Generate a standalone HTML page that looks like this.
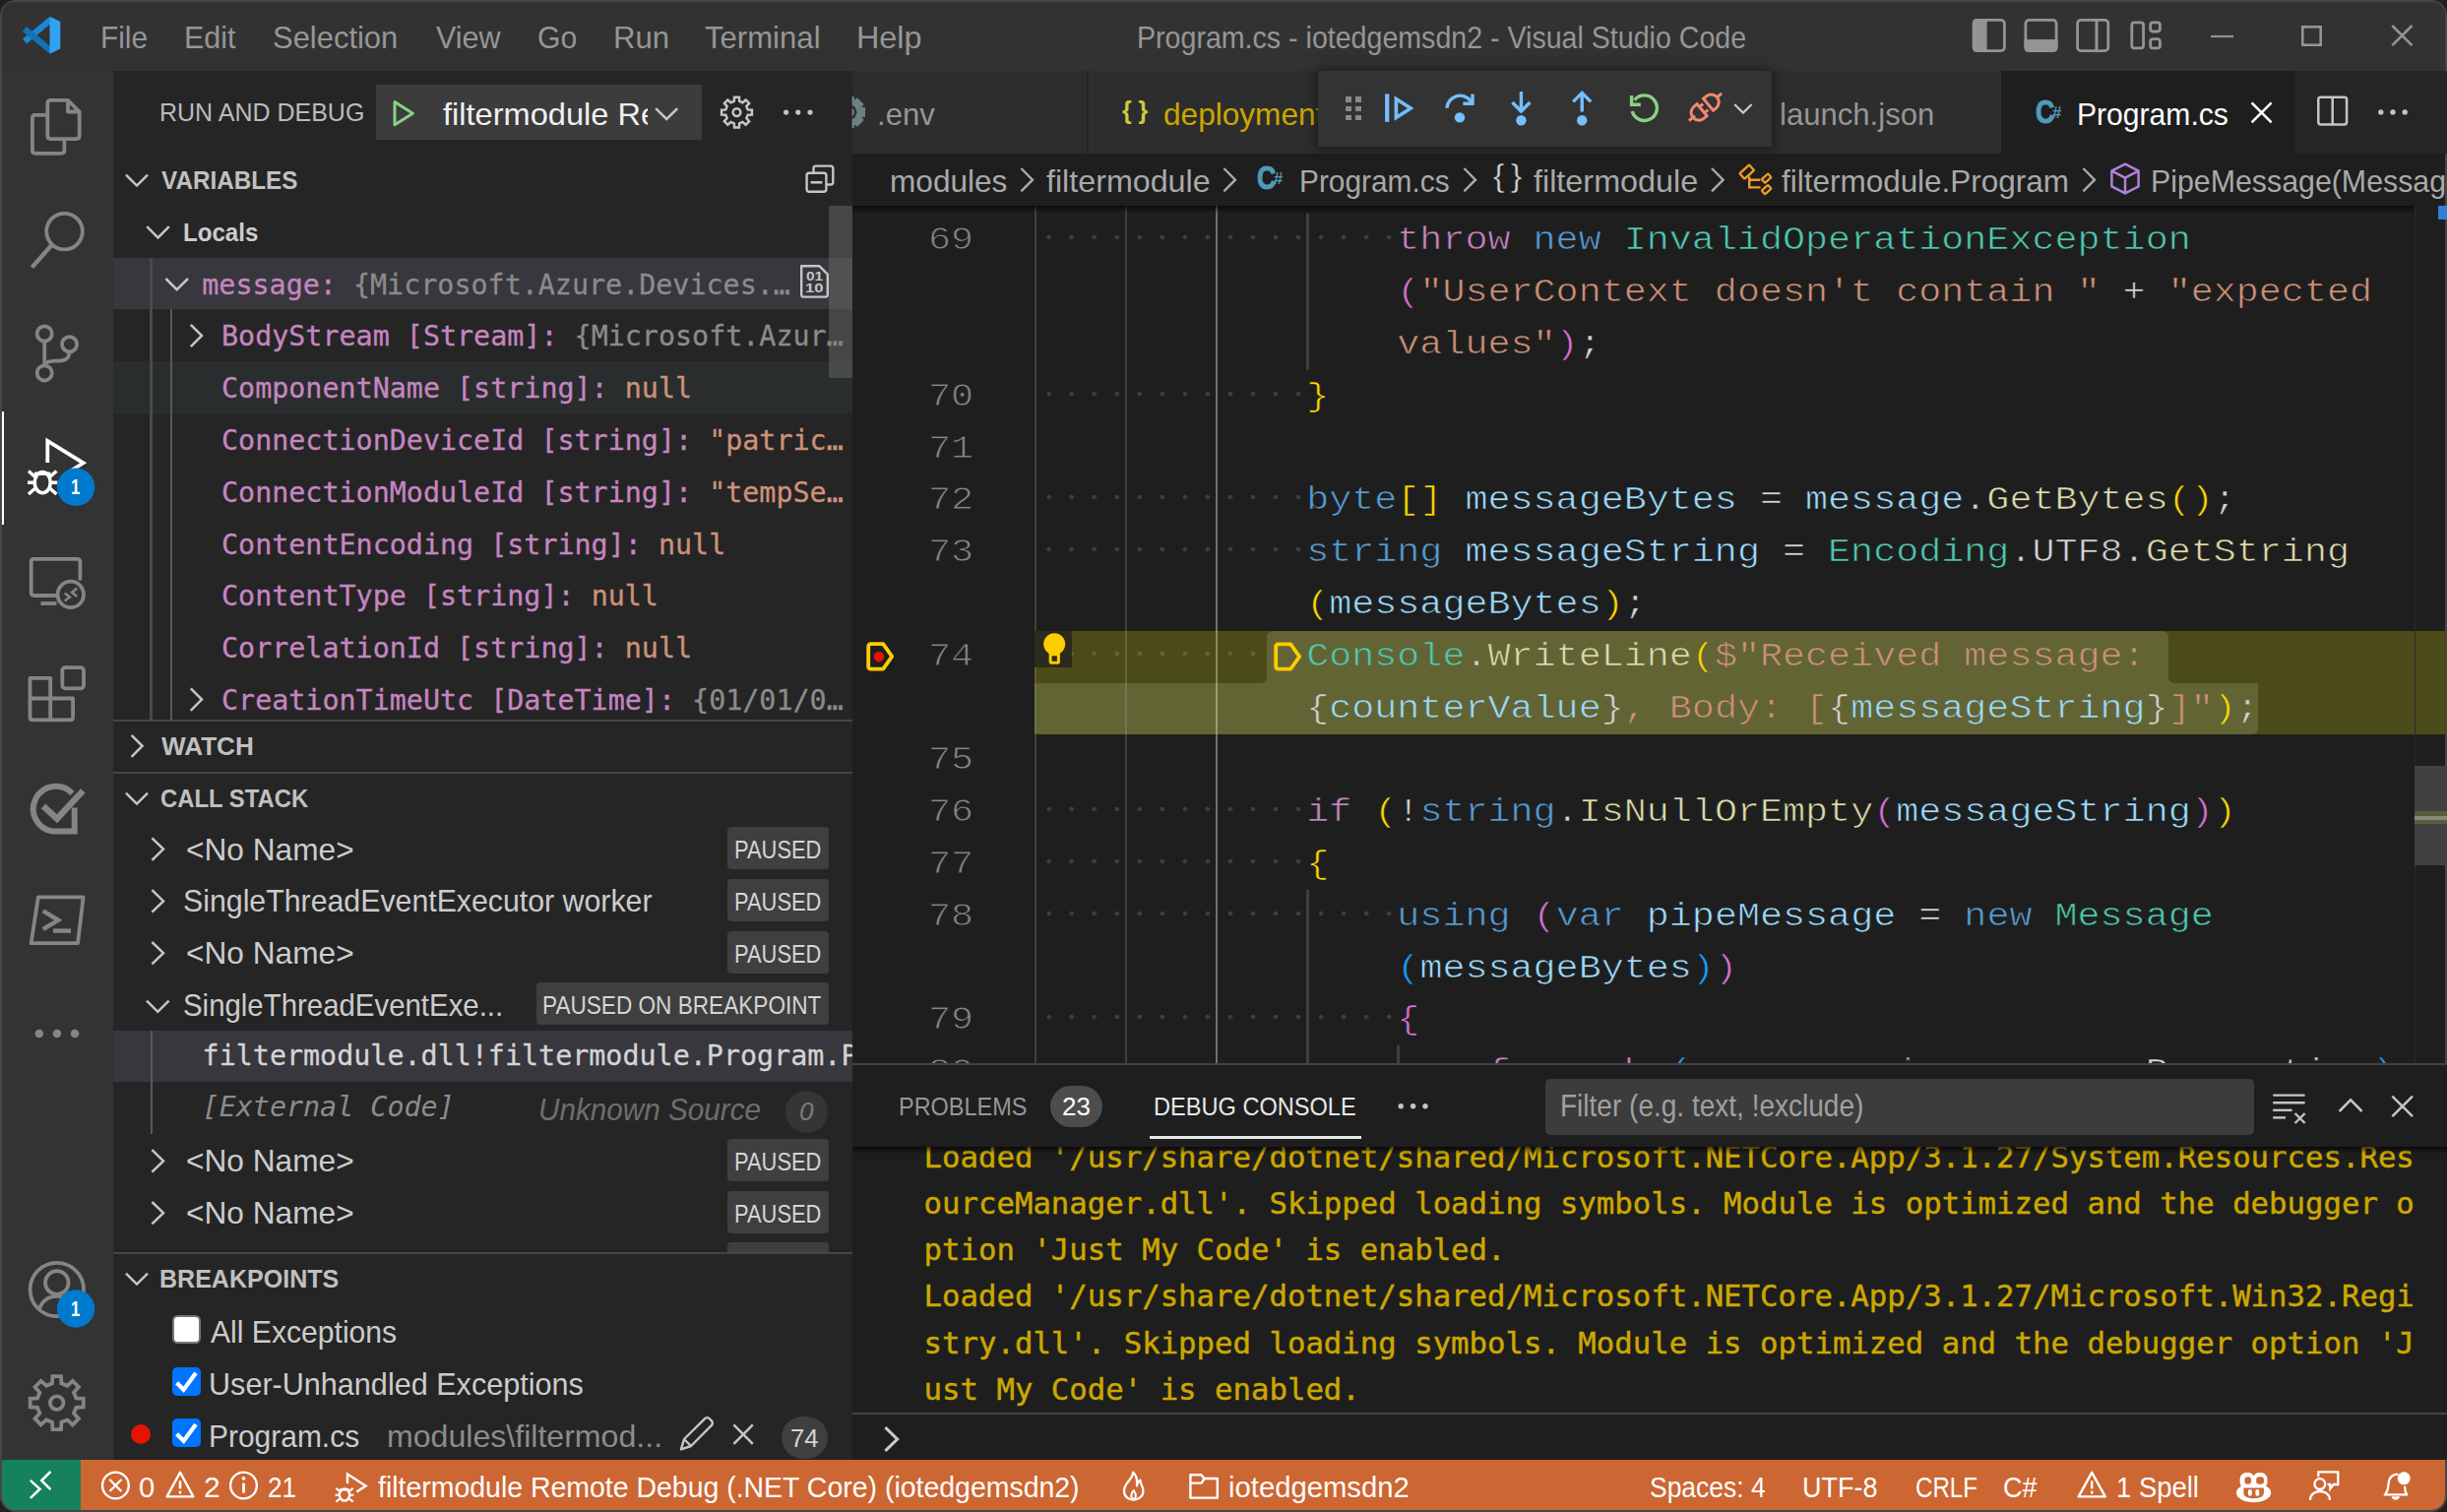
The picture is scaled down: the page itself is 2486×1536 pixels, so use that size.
<!DOCTYPE html>
<html lang="en"><head><meta charset="utf-8"><title>Program.cs - iotedgemsdn2 - Visual Studio Code</title>
<style>
*{box-sizing:border-box;margin:0;padding:0}
html,body{width:2486px;height:1536px;overflow:hidden;background:#212121}
#w{position:absolute;left:0;top:0;width:2486px;height:1536px;overflow:hidden}
#w div,#w span,#w svg{position:absolute}
#w span{display:block}
#w span span{position:static;display:inline}
#w>svg{overflow:visible;z-index:2}
</style></head>
<body><div id="w">
<div style="left:0.00px;top:0.00px;width:2486.00px;height:1536.00px;background:#464646;border-radius:16px"></div>
<div style="left:2.00px;top:2.00px;width:2482.00px;height:1532.00px;background:#1e1e1e;border-radius:14px;overflow:hidden"><div style="left:0;top:0;width:2486px;height:70.0px;background:#323233"></div><div style="left:0;top:70.0px;width:113.2px;height:1411.2px;background:#333333"></div><div style="left:113.2px;top:70.0px;width:750.4px;height:1411.2px;background:#252526"></div><div style="left:0;top:1481.2px;width:2486px;height:52.799999999999955px;background:#cc6633"></div><div style="left:0;top:1481.2px;width:79.6px;height:52.799999999999955px;background:#16825d"></div></div>
<span style="left:102.09px;top:22.59px;font:400 31.2px/31.2px 'Liberation Sans', sans-serif;color:#969696;white-space:pre;transform:scaleX(0.9574);transform-origin:0 0;">File</span>
<span style="left:187.05px;top:22.59px;font:400 31.2px/31.2px 'Liberation Sans', sans-serif;color:#969696;white-space:pre;transform:scaleX(0.9750);transform-origin:0 0;">Edit</span>
<span style="left:277.32px;top:22.59px;font:400 31.2px/31.2px 'Liberation Sans', sans-serif;color:#969696;white-space:pre;transform:scaleX(0.9920);transform-origin:0 0;">Selection</span>
<span style="left:442.50px;top:22.59px;font:400 31.2px/31.2px 'Liberation Sans', sans-serif;color:#969696;white-space:pre;transform:scaleX(0.9776);transform-origin:0 0;">View</span>
<span style="left:546.03px;top:22.59px;font:400 31.2px/31.2px 'Liberation Sans', sans-serif;color:#969696;white-space:pre;transform:scaleX(0.9675);transform-origin:0 0;">Go</span>
<span style="left:623.00px;top:22.59px;font:400 31.2px/31.2px 'Liberation Sans', sans-serif;color:#969696;white-space:pre;">Run</span>
<span style="left:716.00px;top:22.59px;font:400 31.2px/31.2px 'Liberation Sans', sans-serif;color:#969696;white-space:pre;transform:scaleX(0.9974);transform-origin:0 0;">Terminal</span>
<span style="left:869.62px;top:22.59px;font:400 31.2px/31.2px 'Liberation Sans', sans-serif;color:#969696;white-space:pre;transform:scaleX(1.0377);transform-origin:0 0;">Help</span>
<span style="left:1155.17px;top:22.89px;font:400 31.2px/31.2px 'Liberation Sans', sans-serif;color:#969696;white-space:pre;transform:scaleX(0.9165);transform-origin:0 0;">Program.cs - iotedgemsdn2 - Visual Studio Code</span>
<div style="left:2.00px;top:417.60px;width:2.40px;height:115.20px;background:#ffffff;"></div>
<span style="left:71.73px;top:484.32px;font:700 21.6px/21.6px 'Liberation Sans', sans-serif;color:#ffffff;white-space:pre;transform:scaleX(0.7727);transform-origin:0 0;z-index:5;">1</span>
<span style="left:71.63px;top:1318.92px;font:700 21.6px/21.6px 'Liberation Sans', sans-serif;color:#ffffff;white-space:pre;transform:scaleX(0.7727);transform-origin:0 0;z-index:5;">1</span>
<span style="left:162.11px;top:101.45px;font:400 26.4px/26.4px 'Liberation Sans', sans-serif;color:#bbbbbb;white-space:pre;transform:scaleX(0.9472);transform-origin:0 0;">RUN AND DEBUG</span>
<div style="left:382.00px;top:85.80px;width:330.80px;height:55.90px;background:#3c3c3c;"></div>
<div style="left:449.50px;top:94.59px;width:208.50px;height:45.20px;overflow:hidden"><span style="position:absolute;left:0;top:6px;font:400 31.2px/31.2px 'Liberation Sans', sans-serif;color:#f0f0f0;white-space:pre;transform:scaleX(1.0445);transform-origin:0 0;">filtermodule Remote Debug (.NET Core)</span></div>
<span style="left:163.50px;top:169.55px;font:700 26.4px/26.4px 'Liberation Sans', sans-serif;color:#c0c0c0;white-space:pre;transform:scaleX(0.9200);transform-origin:0 0;">VARIABLES</span>
<div style="left:115.20px;top:261.60px;width:750.40px;height:52.80px;background:#37373d;"></div>
<div style="left:115.20px;top:367.20px;width:750.40px;height:52.80px;background:#2a2d2e;"></div>
<div style="left:152.40px;top:261.60px;width:2.20px;height:469.60px;background:#4a4a4b;"></div>
<div style="left:172.90px;top:314.40px;width:2.20px;height:416.80px;background:#585858;"></div>
<span style="left:186.37px;top:222.75px;font:700 26.4px/26.4px 'Liberation Sans', sans-serif;color:#cccccc;white-space:pre;transform:scaleX(0.9136);transform-origin:0 0;">Locals</span>
<span style="left:205.30px;top:275.50px;font:400 28.37px/28.37px 'DejaVu Sans Mono', 'Liberation Mono', monospace;color:#ccc;white-space:pre;-webkit-text-stroke-width:0.3px;"><span style="color:#c586c0">message: </span><span style="color:#8b8b8b">{Microsoft.Azure.Devices.…</span></span>
<span style="left:225.00px;top:328.30px;font:400 28.37px/28.37px 'DejaVu Sans Mono', 'Liberation Mono', monospace;color:#ccc;white-space:pre;-webkit-text-stroke-width:0.3px;"><span style="color:#c586c0">BodyStream [Stream]: </span><span style="color:#8b8b8b">{Microsoft.Azur…</span></span>
<span style="left:225.00px;top:381.10px;font:400 28.37px/28.37px 'DejaVu Sans Mono', 'Liberation Mono', monospace;color:#ccc;white-space:pre;-webkit-text-stroke-width:0.3px;"><span style="color:#c586c0">ComponentName [string]: </span><span style="color:#ce9178">null</span></span>
<span style="left:225.00px;top:433.90px;font:400 28.37px/28.37px 'DejaVu Sans Mono', 'Liberation Mono', monospace;color:#ccc;white-space:pre;-webkit-text-stroke-width:0.3px;"><span style="color:#c586c0">ConnectionDeviceId [string]: </span><span style="color:#ce9178">"patric…</span></span>
<span style="left:225.00px;top:486.70px;font:400 28.37px/28.37px 'DejaVu Sans Mono', 'Liberation Mono', monospace;color:#ccc;white-space:pre;-webkit-text-stroke-width:0.3px;"><span style="color:#c586c0">ConnectionModuleId [string]: </span><span style="color:#ce9178">"tempSe…</span></span>
<span style="left:225.00px;top:539.50px;font:400 28.37px/28.37px 'DejaVu Sans Mono', 'Liberation Mono', monospace;color:#ccc;white-space:pre;-webkit-text-stroke-width:0.3px;"><span style="color:#c586c0">ContentEncoding [string]: </span><span style="color:#ce9178">null</span></span>
<span style="left:225.00px;top:592.30px;font:400 28.37px/28.37px 'DejaVu Sans Mono', 'Liberation Mono', monospace;color:#ccc;white-space:pre;-webkit-text-stroke-width:0.3px;"><span style="color:#c586c0">ContentType [string]: </span><span style="color:#ce9178">null</span></span>
<span style="left:225.00px;top:645.10px;font:400 28.37px/28.37px 'DejaVu Sans Mono', 'Liberation Mono', monospace;color:#ccc;white-space:pre;-webkit-text-stroke-width:0.3px;"><span style="color:#c586c0">CorrelationId [string]: </span><span style="color:#ce9178">null</span></span>
<span style="left:225.00px;top:697.90px;font:400 28.37px/28.37px 'DejaVu Sans Mono', 'Liberation Mono', monospace;color:#ccc;white-space:pre;-webkit-text-stroke-width:0.3px;"><span style="color:#c586c0">CreationTimeUtc [DateTime]: </span><span style="color:#8b8b8b">{01/01/0…</span></span>
<span style="left:819.40px;top:274.93px;font:700 12.6px/12.6px 'Liberation Sans', sans-serif;color:#c5c5c5;white-space:pre;transform:scaleX(1.2286);transform-origin:0 0;">01</span>
<span style="left:818.08px;top:286.93px;font:700 12.6px/12.6px 'Liberation Sans', sans-serif;color:#c5c5c5;white-space:pre;transform:scaleX(1.3231);transform-origin:0 0;">10</span>
<div style="left:842.00px;top:209.20px;width:23.60px;height:174.40px;background:rgba(121,121,121,0.4);"></div>
<div style="left:115.20px;top:731.20px;width:750.40px;height:56.00px;background:#252526;"></div>
<div style="left:115.20px;top:731.20px;width:750.40px;height:2.20px;background:#464647;"></div>
<span style="left:163.50px;top:744.75px;font:700 26.4px/26.4px 'Liberation Sans', sans-serif;color:#c0c0c0;white-space:pre;transform:scaleX(0.9903);transform-origin:0 0;">WATCH</span>
<div style="left:115.20px;top:784.00px;width:750.40px;height:2.20px;background:#464647;"></div>
<span style="left:162.60px;top:797.55px;font:700 26.4px/26.4px 'Liberation Sans', sans-serif;color:#c0c0c0;white-space:pre;transform:scaleX(0.9036);transform-origin:0 0;">CALL STACK</span>
<span style="left:189.48px;top:847.59px;font:400 31.2px/31.2px 'Liberation Sans', sans-serif;color:#cccccc;white-space:pre;transform:scaleX(1.0151);transform-origin:0 0;">&lt;No Name&gt;</span>
<div style="left:739.00px;top:839.90px;width:103.00px;height:43.10px;background:#3f3f40;border-radius:4px"></div>
<span style="left:746.42px;top:849.99px;font:400 26.0px/26.0px 'Liberation Sans', sans-serif;color:#d4d4d4;white-space:pre;transform:scaleX(0.8422);transform-origin:0 0;">PAUSED</span>
<span style="left:186.06px;top:900.39px;font:400 31.2px/31.2px 'Liberation Sans', sans-serif;color:#cccccc;white-space:pre;transform:scaleX(0.9713);transform-origin:0 0;">SingleThreadEventExecutor worker</span>
<div style="left:739.00px;top:892.70px;width:103.00px;height:43.10px;background:#3f3f40;border-radius:4px"></div>
<span style="left:746.42px;top:902.79px;font:400 26.0px/26.0px 'Liberation Sans', sans-serif;color:#d4d4d4;white-space:pre;transform:scaleX(0.8422);transform-origin:0 0;">PAUSED</span>
<span style="left:189.48px;top:953.19px;font:400 31.2px/31.2px 'Liberation Sans', sans-serif;color:#cccccc;white-space:pre;transform:scaleX(1.0151);transform-origin:0 0;">&lt;No Name&gt;</span>
<div style="left:739.00px;top:945.50px;width:103.00px;height:43.10px;background:#3f3f40;border-radius:4px"></div>
<span style="left:746.42px;top:955.59px;font:400 26.0px/26.0px 'Liberation Sans', sans-serif;color:#d4d4d4;white-space:pre;transform:scaleX(0.8422);transform-origin:0 0;">PAUSED</span>
<span style="left:186.11px;top:1005.99px;font:400 31.2px/31.2px 'Liberation Sans', sans-serif;color:#cccccc;white-space:pre;transform:scaleX(0.9426);transform-origin:0 0;">SingleThreadEventExe...</span>
<div style="left:545.00px;top:998.30px;width:297.00px;height:43.10px;background:#3f3f40;border-radius:4px"></div>
<span style="left:550.66px;top:1008.39px;font:400 26.0px/26.0px 'Liberation Sans', sans-serif;color:#d4d4d4;white-space:pre;transform:scaleX(0.8691);transform-origin:0 0;">PAUSED ON BREAKPOINT</span>
<div style="left:115.20px;top:1046.50px;width:750.40px;height:52.80px;background:#37373d;"></div>
<div style="left:152.60px;top:1046.50px;width:2.20px;height:105.60px;background:#585858;"></div>
<div style="left:205.60px;top:1053.00px;width:660.00px;height:42.37px;overflow:hidden"><span style="position:absolute;left:0;top:6px;font:400 28.37px/28.37px 'DejaVu Sans Mono', 'Liberation Mono', monospace;color:#d4d4d4;white-space:pre;-webkit-text-stroke-width:0.3px;">filtermodule.dll!filtermodule.Program.PipeMessage(Message message, object userContext) Line 74</span></div>
<span style="left:205.60px;top:1111.40px;font:italic 400 28.37px/28.37px 'DejaVu Sans Mono', 'Liberation Mono', monospace;color:#8c8c8c;white-space:pre;">[External Code]</span>
<span style="left:546.90px;top:1111.79px;font:italic 400 31.2px/31.2px 'Liberation Sans', sans-serif;color:#6e6e6e;white-space:pre;transform:scaleX(0.9519);transform-origin:0 0;">Unknown Source</span>
<div style="left:797.90px;top:1107.70px;width:43.20px;height:43.30px;background:#353536;border-radius:22px"></div>
<span style="left:811.81px;top:1115.85px;font:italic 400 26.4px/26.4px 'Liberation Sans', sans-serif;color:#7c7c7c;white-space:pre;transform:scaleX(0.9929);transform-origin:0 0;">0</span>
<span style="left:189.48px;top:1164.39px;font:400 31.2px/31.2px 'Liberation Sans', sans-serif;color:#cccccc;white-space:pre;transform:scaleX(1.0151);transform-origin:0 0;">&lt;No Name&gt;</span>
<div style="left:739.00px;top:1156.70px;width:103.00px;height:43.10px;background:#3f3f40;border-radius:4px"></div>
<span style="left:746.42px;top:1166.79px;font:400 26.0px/26.0px 'Liberation Sans', sans-serif;color:#d4d4d4;white-space:pre;transform:scaleX(0.8422);transform-origin:0 0;">PAUSED</span>
<span style="left:189.48px;top:1217.19px;font:400 31.2px/31.2px 'Liberation Sans', sans-serif;color:#cccccc;white-space:pre;transform:scaleX(1.0151);transform-origin:0 0;">&lt;No Name&gt;</span>
<div style="left:739.00px;top:1209.50px;width:103.00px;height:43.10px;background:#3f3f40;border-radius:4px"></div>
<span style="left:746.42px;top:1219.59px;font:400 26.0px/26.0px 'Liberation Sans', sans-serif;color:#d4d4d4;white-space:pre;transform:scaleX(0.8422);transform-origin:0 0;">PAUSED</span>
<div style="left:739.00px;top:1262.30px;width:103.00px;height:12.00px;background:#3f3f40;border-radius:4px 4px 0 0"></div>
<div style="left:115.20px;top:1272.00px;width:750.40px;height:211.20px;background:#252526;"></div>
<div style="left:115.20px;top:1272.00px;width:750.40px;height:2.20px;background:#464647;"></div>
<span style="left:161.60px;top:1285.55px;font:700 26.4px/26.4px 'Liberation Sans', sans-serif;color:#c0c0c0;white-space:pre;transform:scaleX(0.9487);transform-origin:0 0;">BREAKPOINTS</span>
<div style="left:175.20px;top:1336.00px;width:28.90px;height:28.90px;background:#ffffff;border-radius:5.5px;border:2.2px solid #767676"></div>
<span style="left:214.40px;top:1338.09px;font:400 31.2px/31.2px 'Liberation Sans', sans-serif;color:#cccccc;white-space:pre;transform:scaleX(0.9656);transform-origin:0 0;">All Exceptions</span>
<div style="left:175.20px;top:1388.80px;width:28.90px;height:28.90px;background:#0075ff;border-radius:5px"></div>
<span style="left:212.44px;top:1390.79px;font:400 31.2px/31.2px 'Liberation Sans', sans-serif;color:#cccccc;white-space:pre;transform:scaleX(0.9806);transform-origin:0 0;">User-Unhandled Exceptions</span>
<div style="left:175.20px;top:1440.90px;width:28.90px;height:28.90px;background:#0075ff;border-radius:5px"></div>
<span style="left:212.48px;top:1443.59px;font:400 31.2px/31.2px 'Liberation Sans', sans-serif;color:#cccccc;white-space:pre;transform:scaleX(0.9605);transform-origin:0 0;">Program.cs</span>
<span style="left:393.34px;top:1443.59px;font:400 31.2px/31.2px 'Liberation Sans', sans-serif;color:#8c8c8c;white-space:pre;transform:scaleX(1.0291);transform-origin:0 0;">modules\filtermod...</span>
<div style="left:794.00px;top:1438.70px;width:47.00px;height:43.30px;background:#3f3f40;border-radius:21.6px"></div>
<span style="left:802.83px;top:1447.65px;font:400 26.4px/26.4px 'Liberation Sans', sans-serif;color:#d4d4d4;white-space:pre;transform:scaleX(0.9714);transform-origin:0 0;">74</span>
<div style="left:865.60px;top:72.00px;width:1620.40px;height:84.00px;background:#252526;"></div>
<div style="left:865.60px;top:72.00px;width:238.20px;height:84.00px;background:#2d2d2d;"></div>
<div style="left:1106.20px;top:72.00px;width:927.00px;height:84.00px;background:#2d2d2d;"></div>
<div style="left:2033.20px;top:72.00px;width:297.80px;height:84.00px;background:#1e1e1e;"></div>
<span style="left:891.01px;top:100.69px;font:400 31.2px/31.2px 'Liberation Sans', sans-serif;color:#969696;white-space:pre;transform:scaleX(0.9964);transform-origin:0 0;">.env</span>
<span style="left:1139.60px;top:98.99px;font:700 26.0px/26.0px 'Liberation Sans', sans-serif;color:#cbcb41;white-space:pre;transform:scaleX(0.9556);transform-origin:0 0;">{ }</span>
<div style="left:1182.49px;top:94.69px;width:157.01px;height:45.20px;overflow:hidden"><span style="position:absolute;left:0;top:6px;font:400 31.2px/31.2px 'Liberation Sans', sans-serif;color:#cca700;white-space:pre;transform:scaleX(1.0133);transform-origin:0 0;">deployment.template.json</span></div>
<span style="left:1808.31px;top:100.69px;font:400 31.2px/31.2px 'Liberation Sans', sans-serif;color:#969696;white-space:pre;transform:scaleX(0.9968);transform-origin:0 0;">launch.json</span>
<span style="left:2067.79px;top:96.87px;font:700 33.0px/33.0px 'Liberation Sans', sans-serif;color:#519aba;white-space:pre;transform:scaleX(0.8091);transform-origin:0 0;-webkit-text-stroke:1.1px #519aba;">C</span>
<span style="left:2085.00px;top:105.81px;font:700 17.0px/17.0px 'Liberation Sans', sans-serif;color:#519aba;white-space:pre;transform:scaleX(0.9800);transform-origin:0 0;">#</span>
<span style="left:2109.87px;top:100.69px;font:400 31.2px/31.2px 'Liberation Sans', sans-serif;color:#ffffff;white-space:pre;transform:scaleX(0.9650);transform-origin:0 0;">Program.cs</span>
<div style="left:1339.20px;top:71.60px;width:461.20px;height:77.20px;background:#333333;box-shadow:0 0 10px 1px rgba(0,0,0,0.55)"></div>
<div style="left:1367.40px;top:98.40px;width:5.40px;height:5.40px;background:#8a8a8a;"></div>
<div style="left:1377.20px;top:98.40px;width:5.40px;height:5.40px;background:#8a8a8a;"></div>
<div style="left:1367.40px;top:107.70px;width:5.40px;height:5.40px;background:#8a8a8a;"></div>
<div style="left:1377.20px;top:107.70px;width:5.40px;height:5.40px;background:#8a8a8a;"></div>
<div style="left:1367.40px;top:117.00px;width:5.40px;height:5.40px;background:#8a8a8a;"></div>
<div style="left:1377.20px;top:117.00px;width:5.40px;height:5.40px;background:#8a8a8a;"></div>
<span style="left:903.57px;top:168.59px;font:400 31.2px/31.2px 'Liberation Sans', sans-serif;color:#a9a9a9;white-space:pre;transform:scaleX(1.0130);transform-origin:0 0;">modules</span>
<span style="left:1062.70px;top:168.59px;font:400 31.2px/31.2px 'Liberation Sans', sans-serif;color:#a9a9a9;white-space:pre;transform:scaleX(1.0337);transform-origin:0 0;">filtermodule</span>
<span style="left:1319.69px;top:168.59px;font:400 31.2px/31.2px 'Liberation Sans', sans-serif;color:#a9a9a9;white-space:pre;transform:scaleX(0.9573);transform-origin:0 0;">Program.cs</span>
<span style="left:1558.00px;top:168.59px;font:400 31.2px/31.2px 'Liberation Sans', sans-serif;color:#a9a9a9;white-space:pre;transform:scaleX(1.0375);transform-origin:0 0;">filtermodule</span>
<span style="left:1810.30px;top:168.59px;font:400 31.2px/31.2px 'Liberation Sans', sans-serif;color:#a9a9a9;white-space:pre;transform:scaleX(1.0087);transform-origin:0 0;">filtermodule.Program</span>
<div style="left:2185.46px;top:162.59px;width:298.54px;height:45.20px;overflow:hidden"><span style="position:absolute;left:0;top:6px;font:400 31.2px/31.2px 'Liberation Sans', sans-serif;color:#a9a9a9;white-space:pre;transform:scaleX(0.9725);transform-origin:0 0;">PipeMessage(Message, object)</span></div>
<span style="left:1276.79px;top:164.47px;font:700 33.0px/33.0px 'Liberation Sans', sans-serif;color:#519aba;white-space:pre;transform:scaleX(0.8091);transform-origin:0 0;-webkit-text-stroke:1.1px #519aba;">C</span>
<span style="left:1294.00px;top:173.41px;font:700 17.0px/17.0px 'Liberation Sans', sans-serif;color:#519aba;white-space:pre;transform:scaleX(0.9800);transform-origin:0 0;">#</span>
<span style="left:1516.50px;top:163.45px;font:400 31.6px/31.6px 'Liberation Sans', sans-serif;color:#d4d4d4;white-space:pre;transform:scaleX(1.0700);transform-origin:0 0;-webkit-text-stroke:0.35px #1e1e1e;">{</span>
<span style="left:1535.00px;top:163.45px;font:400 31.6px/31.6px 'Liberation Sans', sans-serif;color:#d4d4d4;white-space:pre;transform:scaleX(1.0500);transform-origin:0 0;-webkit-text-stroke:0.35px #1e1e1e;">}</span>
<div style="left:1051.00px;top:640.90px;width:1434.00px;height:105.60px;background:#4b4a19;"></div>
<div style="left:1286.60px;top:640.90px;width:916.10px;height:53.80px;background:#626434;border-radius:6px 6px 0 0"></div>
<div style="left:1051.00px;top:693.70px;width:1242.60px;height:52.80px;background:#626434;border-radius:6px 0 6px 6px"></div>
<div style="left:2202.70px;top:687.70px;width:6.00px;height:6.00px;background:#626434;"></div>
<div style="left:2202.70px;top:687.70px;width:6.00px;height:6.00px;background:#4b4a19;border-radius:0 0 0 6px"></div>
<div style="left:1280.60px;top:687.70px;width:6.00px;height:6.00px;background:#626434;"></div>
<div style="left:1280.60px;top:687.70px;width:6.00px;height:6.00px;background:#4b4a19;border-radius:0 0 6px 0"></div>
<div style="left:1050.80px;top:208.80px;width:2.40px;height:872.20px;background:#404040;"></div>
<div style="left:1143.00px;top:208.80px;width:2.40px;height:872.20px;background:#404040;"></div>
<div style="left:1235.10px;top:208.80px;width:2.40px;height:872.20px;background:#707070;"></div>
<div style="left:1050.80px;top:640.90px;width:2.40px;height:52.80px;background:#5e5e2f;"></div>
<div style="left:1050.80px;top:693.70px;width:2.40px;height:52.80px;background:#6f7144;"></div>
<div style="left:1143.00px;top:640.90px;width:2.40px;height:52.80px;background:#666633;"></div>
<div style="left:1143.00px;top:693.70px;width:2.40px;height:52.80px;background:#75774a;"></div>
<div style="left:1235.10px;top:640.90px;width:2.40px;height:52.80px;background:#8d8d5a;"></div>
<div style="left:1235.10px;top:693.70px;width:2.40px;height:52.80px;background:#9a9b70;"></div>
<div style="left:1327.30px;top:217.30px;width:2.40px;height:158.40px;background:#404040;"></div>
<div style="left:1327.30px;top:903.70px;width:2.40px;height:177.30px;background:#404040;"></div>
<div style="left:1419.40px;top:1062.10px;width:2.40px;height:18.90px;background:#404040;"></div>
<span style="left:943.00px;top:224.47px;font:400 38.4px/38.4px 'Liberation Mono', monospace;color:#858585;white-space:pre;transform:scaleY(0.87);transform-origin:0 29.43px;-webkit-text-stroke:1.0px #1e1e1e;">69</span>
<div style="left:1052.00px;top:237.40px;width:368.64px;height:8.00px;background:radial-gradient(circle at 13.7px 4px, rgba(227,228,226,0.17) 1.7px, rgba(227,228,226,0) 2.7px);background-size:23.04px 8px"></div>
<span style="left:1419.34px;top:224.47px;font:400 38.4px/38.4px 'Liberation Mono', monospace;color:#d4d4d4;white-space:pre;transform:scaleY(0.87);transform-origin:0 29.43px;-webkit-text-stroke:0.8px #1e1e1e;"><span style="color:#c586c0">throw</span><span style="color:#d4d4d4"> </span><span style="color:#569cd6">new</span><span style="color:#d4d4d4"> </span><span style="color:#4ec9b0">InvalidOperationException</span></span>
<span style="left:1419.34px;top:277.27px;font:400 38.4px/38.4px 'Liberation Mono', monospace;color:#d4d4d4;white-space:pre;transform:scaleY(0.87);transform-origin:0 29.43px;-webkit-text-stroke:0.8px #1e1e1e;"><span style="color:#da70d6">(</span><span style="color:#ce9178">"UserContext doesn't contain "</span><span style="color:#d4d4d4"> + </span><span style="color:#ce9178">"expected</span></span>
<span style="left:1419.34px;top:330.07px;font:400 38.4px/38.4px 'Liberation Mono', monospace;color:#d4d4d4;white-space:pre;transform:scaleY(0.87);transform-origin:0 29.43px;-webkit-text-stroke:0.8px #1e1e1e;"><span style="color:#ce9178">values"</span><span style="color:#da70d6">)</span><span style="color:#d4d4d4">;</span></span>
<span style="left:943.00px;top:382.87px;font:400 38.4px/38.4px 'Liberation Mono', monospace;color:#858585;white-space:pre;transform:scaleY(0.87);transform-origin:0 29.43px;-webkit-text-stroke:1.0px #1e1e1e;">70</span>
<div style="left:1052.00px;top:395.80px;width:276.48px;height:8.00px;background:radial-gradient(circle at 13.7px 4px, rgba(227,228,226,0.17) 1.7px, rgba(227,228,226,0) 2.7px);background-size:23.04px 8px"></div>
<span style="left:1327.18px;top:382.87px;font:400 38.4px/38.4px 'Liberation Mono', monospace;color:#d4d4d4;white-space:pre;transform:scaleY(0.87);transform-origin:0 29.43px;-webkit-text-stroke:0.8px #1e1e1e;"><span style="color:#ffd700">}</span></span>
<span style="left:943.00px;top:435.67px;font:400 38.4px/38.4px 'Liberation Mono', monospace;color:#858585;white-space:pre;transform:scaleY(0.87);transform-origin:0 29.43px;-webkit-text-stroke:1.0px #1e1e1e;">71</span>
<span style="left:943.00px;top:488.47px;font:400 38.4px/38.4px 'Liberation Mono', monospace;color:#858585;white-space:pre;transform:scaleY(0.87);transform-origin:0 29.43px;-webkit-text-stroke:1.0px #1e1e1e;">72</span>
<div style="left:1052.00px;top:501.40px;width:276.48px;height:8.00px;background:radial-gradient(circle at 13.7px 4px, rgba(227,228,226,0.17) 1.7px, rgba(227,228,226,0) 2.7px);background-size:23.04px 8px"></div>
<span style="left:1327.18px;top:488.47px;font:400 38.4px/38.4px 'Liberation Mono', monospace;color:#d4d4d4;white-space:pre;transform:scaleY(0.87);transform-origin:0 29.43px;-webkit-text-stroke:0.8px #1e1e1e;"><span style="color:#569cd6">byte</span><span style="color:#ffd700">[]</span><span style="color:#9cdcfe"> messageBytes</span><span style="color:#d4d4d4"> = </span><span style="color:#9cdcfe">message</span><span style="color:#d4d4d4">.</span><span style="color:#dcdcaa">GetBytes</span><span style="color:#ffd700">()</span><span style="color:#d4d4d4">;</span></span>
<span style="left:943.00px;top:541.27px;font:400 38.4px/38.4px 'Liberation Mono', monospace;color:#858585;white-space:pre;transform:scaleY(0.87);transform-origin:0 29.43px;-webkit-text-stroke:1.0px #1e1e1e;">73</span>
<div style="left:1052.00px;top:554.20px;width:276.48px;height:8.00px;background:radial-gradient(circle at 13.7px 4px, rgba(227,228,226,0.17) 1.7px, rgba(227,228,226,0) 2.7px);background-size:23.04px 8px"></div>
<span style="left:1327.18px;top:541.27px;font:400 38.4px/38.4px 'Liberation Mono', monospace;color:#d4d4d4;white-space:pre;transform:scaleY(0.87);transform-origin:0 29.43px;-webkit-text-stroke:0.8px #1e1e1e;"><span style="color:#569cd6">string</span><span style="color:#9cdcfe"> messageString</span><span style="color:#d4d4d4"> = </span><span style="color:#4ec9b0">Encoding</span><span style="color:#d4d4d4">.</span><span style="color:#d4d4d4">UTF8</span><span style="color:#d4d4d4">.</span><span style="color:#dcdcaa">GetString</span></span>
<span style="left:1327.18px;top:594.07px;font:400 38.4px/38.4px 'Liberation Mono', monospace;color:#d4d4d4;white-space:pre;transform:scaleY(0.87);transform-origin:0 29.43px;-webkit-text-stroke:0.8px #1e1e1e;"><span style="color:#ffd700">(</span><span style="color:#9cdcfe">messageBytes</span><span style="color:#ffd700">)</span><span style="color:#d4d4d4">;</span></span>
<span style="left:943.00px;top:646.87px;font:400 38.4px/38.4px 'Liberation Mono', monospace;color:#858585;white-space:pre;transform:scaleY(0.87);transform-origin:0 29.43px;-webkit-text-stroke:1.0px #1e1e1e;">74</span>
<div style="left:1052.00px;top:659.80px;width:230.40px;height:8.00px;background:radial-gradient(circle at 13.7px 4px, rgba(227,228,226,0.17) 1.7px, rgba(227,228,226,0) 2.7px);background-size:23.04px 8px"></div>
<span style="left:1327.18px;top:646.87px;font:400 38.4px/38.4px 'Liberation Mono', monospace;color:#d4d4d4;white-space:pre;transform:scaleY(0.87);transform-origin:0 29.43px;-webkit-text-stroke:0.8px #626434;"><span style="color:#4ec9b0">Console</span><span style="color:#d4d4d4">.</span><span style="color:#dcdcaa">WriteLine</span><span style="color:#ffd700">(</span><span style="color:#ce9178">$"Received message: </span></span>
<span style="left:1327.18px;top:699.67px;font:400 38.4px/38.4px 'Liberation Mono', monospace;color:#d4d4d4;white-space:pre;transform:scaleY(0.87);transform-origin:0 29.43px;-webkit-text-stroke:0.8px #626434;"><span style="color:#d4d4d4">{</span><span style="color:#9cdcfe">counterValue</span><span style="color:#d4d4d4">}</span><span style="color:#ce9178">, Body: [</span><span style="color:#d4d4d4">{</span><span style="color:#9cdcfe">messageString</span><span style="color:#d4d4d4">}</span><span style="color:#ce9178">]"</span><span style="color:#ffd700">)</span><span style="color:#d4d4d4">;</span></span>
<span style="left:943.00px;top:752.47px;font:400 38.4px/38.4px 'Liberation Mono', monospace;color:#858585;white-space:pre;transform:scaleY(0.87);transform-origin:0 29.43px;-webkit-text-stroke:1.0px #1e1e1e;">75</span>
<span style="left:943.00px;top:805.27px;font:400 38.4px/38.4px 'Liberation Mono', monospace;color:#858585;white-space:pre;transform:scaleY(0.87);transform-origin:0 29.43px;-webkit-text-stroke:1.0px #1e1e1e;">76</span>
<div style="left:1052.00px;top:818.20px;width:276.48px;height:8.00px;background:radial-gradient(circle at 13.7px 4px, rgba(227,228,226,0.17) 1.7px, rgba(227,228,226,0) 2.7px);background-size:23.04px 8px"></div>
<span style="left:1327.18px;top:805.27px;font:400 38.4px/38.4px 'Liberation Mono', monospace;color:#d4d4d4;white-space:pre;transform:scaleY(0.87);transform-origin:0 29.43px;-webkit-text-stroke:0.8px #1e1e1e;"><span style="color:#c586c0">if</span><span style="color:#d4d4d4"> </span><span style="color:#ffd700">(</span><span style="color:#d4d4d4">!</span><span style="color:#569cd6">string</span><span style="color:#d4d4d4">.</span><span style="color:#dcdcaa">IsNullOrEmpty</span><span style="color:#da70d6">(</span><span style="color:#9cdcfe">messageString</span><span style="color:#da70d6">)</span><span style="color:#ffd700">)</span></span>
<span style="left:943.00px;top:858.07px;font:400 38.4px/38.4px 'Liberation Mono', monospace;color:#858585;white-space:pre;transform:scaleY(0.87);transform-origin:0 29.43px;-webkit-text-stroke:1.0px #1e1e1e;">77</span>
<div style="left:1052.00px;top:871.00px;width:276.48px;height:8.00px;background:radial-gradient(circle at 13.7px 4px, rgba(227,228,226,0.17) 1.7px, rgba(227,228,226,0) 2.7px);background-size:23.04px 8px"></div>
<span style="left:1327.18px;top:858.07px;font:400 38.4px/38.4px 'Liberation Mono', monospace;color:#d4d4d4;white-space:pre;transform:scaleY(0.87);transform-origin:0 29.43px;-webkit-text-stroke:0.8px #1e1e1e;"><span style="color:#ffd700">{</span></span>
<span style="left:943.00px;top:910.87px;font:400 38.4px/38.4px 'Liberation Mono', monospace;color:#858585;white-space:pre;transform:scaleY(0.87);transform-origin:0 29.43px;-webkit-text-stroke:1.0px #1e1e1e;">78</span>
<div style="left:1052.00px;top:923.80px;width:368.64px;height:8.00px;background:radial-gradient(circle at 13.7px 4px, rgba(227,228,226,0.17) 1.7px, rgba(227,228,226,0) 2.7px);background-size:23.04px 8px"></div>
<span style="left:1419.34px;top:910.87px;font:400 38.4px/38.4px 'Liberation Mono', monospace;color:#d4d4d4;white-space:pre;transform:scaleY(0.87);transform-origin:0 29.43px;-webkit-text-stroke:0.8px #1e1e1e;"><span style="color:#569cd6">using</span><span style="color:#d4d4d4"> </span><span style="color:#da70d6">(</span><span style="color:#569cd6">var</span><span style="color:#9cdcfe"> pipeMessage</span><span style="color:#d4d4d4"> = </span><span style="color:#569cd6">new</span><span style="color:#4ec9b0"> Message</span></span>
<span style="left:1419.34px;top:963.67px;font:400 38.4px/38.4px 'Liberation Mono', monospace;color:#d4d4d4;white-space:pre;transform:scaleY(0.87);transform-origin:0 29.43px;-webkit-text-stroke:0.8px #1e1e1e;"><span style="color:#179fff">(</span><span style="color:#9cdcfe">messageBytes</span><span style="color:#179fff">)</span><span style="color:#da70d6">)</span></span>
<span style="left:943.00px;top:1016.47px;font:400 38.4px/38.4px 'Liberation Mono', monospace;color:#858585;white-space:pre;transform:scaleY(0.87);transform-origin:0 29.43px;-webkit-text-stroke:1.0px #1e1e1e;">79</span>
<div style="left:1052.00px;top:1029.40px;width:368.64px;height:8.00px;background:radial-gradient(circle at 13.7px 4px, rgba(227,228,226,0.17) 1.7px, rgba(227,228,226,0) 2.7px);background-size:23.04px 8px"></div>
<span style="left:1419.34px;top:1016.47px;font:400 38.4px/38.4px 'Liberation Mono', monospace;color:#d4d4d4;white-space:pre;transform:scaleY(0.87);transform-origin:0 29.43px;-webkit-text-stroke:0.8px #1e1e1e;"><span style="color:#da70d6">{</span></span>
<span style="left:943.00px;top:1069.27px;font:400 38.4px/38.4px 'Liberation Mono', monospace;color:#858585;white-space:pre;transform:scaleY(0.87);transform-origin:0 29.43px;-webkit-text-stroke:1.0px #1e1e1e;">80</span>
<div style="left:1052.00px;top:1082.20px;width:460.80px;height:8.00px;background:radial-gradient(circle at 13.7px 4px, rgba(227,228,226,0.17) 1.7px, rgba(227,228,226,0) 2.7px);background-size:23.04px 8px"></div>
<span style="left:1511.50px;top:1069.27px;font:400 38.4px/38.4px 'Liberation Mono', monospace;color:#d4d4d4;white-space:pre;transform:scaleY(0.87);transform-origin:0 29.43px;-webkit-text-stroke:0.8px #1e1e1e;"><span style="color:#c586c0">foreach</span><span style="color:#d4d4d4"> </span><span style="color:#179fff">(</span><span style="color:#569cd6">var</span><span style="color:#9cdcfe"> prop</span><span style="color:#d4d4d4"> </span><span style="color:#c586c0">in</span><span style="color:#9cdcfe"> message</span><span style="color:#d4d4d4">.</span><span style="color:#d4d4d4">Properties</span><span style="color:#179fff">)</span></span>
<div style="left:1051.40px;top:641.20px;width:37.20px;height:37.20px;background:#2b2a1c;"></div>
<div style="left:865.60px;top:208.80px;width:1587.40px;height:8.00px;background:linear-gradient(#000000aa,#00000000);"></div>
<div style="left:2453.00px;top:208.80px;width:1.20px;height:872.20px;background:#2a2a2a;"></div>
<div style="left:2453.00px;top:777.60px;width:33.00px;height:101.40px;background:#414141;"></div>
<div style="left:2453.00px;top:824.00px;width:33.00px;height:13.00px;background:#5c5c3c;"></div>
<div style="left:2453.00px;top:829.00px;width:33.00px;height:4.00px;background:#8a8a7a;"></div>
<div style="left:2476.80px;top:209.00px;width:9.20px;height:14.00px;background:#2f7fd6;"></div>
<div style="left:865.60px;top:1079.80px;width:1620.40px;height:403.40px;background:#1e1e1e;"></div>
<div style="left:865.60px;top:1079.80px;width:1620.40px;height:2.40px;background:#414141;"></div>
<span style="left:912.82px;top:1110.65px;font:400 26.4px/26.4px 'Liberation Sans', sans-serif;color:#979797;white-space:pre;transform:scaleX(0.8889);transform-origin:0 0;">PROBLEMS</span>
<div style="left:1067.00px;top:1102.90px;width:52.70px;height:42.60px;background:#4d4d4d;border-radius:22px"></div>
<span style="left:1078.52px;top:1111.05px;font:400 26.4px/26.4px 'Liberation Sans', sans-serif;color:#ffffff;white-space:pre;transform:scaleX(0.9821);transform-origin:0 0;">23</span>
<span style="left:1171.51px;top:1110.65px;font:400 26.4px/26.4px 'Liberation Sans', sans-serif;color:#e7e7e7;white-space:pre;transform:scaleX(0.8934);transform-origin:0 0;">DEBUG CONSOLE</span>
<div style="left:1168.30px;top:1154.40px;width:214.50px;height:2.40px;background:#e7e7e7;"></div>
<div style="left:1570.40px;top:1096.20px;width:719.40px;height:56.40px;background:#3c3c3c;border-radius:5px"></div>
<span style="left:1585.40px;top:1107.99px;font:400 31.2px/31.2px 'Liberation Sans', sans-serif;color:#a0a0a0;white-space:pre;transform:scaleX(0.8985);transform-origin:0 0;">Filter (e.g. text, !exclude)</span>
<div style="left:865.60px;top:1165.00px;width:1620.40px;height:270.30px;background:#1e1e1e;overflow:hidden"><span style="left:73.00px;top:-3.66px;font:400 30.68px/30.68px 'DejaVu Sans Mono', 'Liberation Mono', monospace;color:#cca700;white-space:pre;-webkit-text-stroke-width:0.45px">Loaded '/usr/share/dotnet/shared/Microsoft.NETCore.App/3.1.27/System.Resources.Res</span><span style="left:73.00px;top:43.38px;font:400 30.68px/30.68px 'DejaVu Sans Mono', 'Liberation Mono', monospace;color:#cca700;white-space:pre;-webkit-text-stroke-width:0.45px">ourceManager.dll'. Skipped loading symbols. Module is optimized and the debugger o</span><span style="left:73.00px;top:90.42px;font:400 30.68px/30.68px 'DejaVu Sans Mono', 'Liberation Mono', monospace;color:#cca700;white-space:pre;-webkit-text-stroke-width:0.45px">ption 'Just My Code' is enabled.</span><span style="left:73.00px;top:137.46px;font:400 30.68px/30.68px 'DejaVu Sans Mono', 'Liberation Mono', monospace;color:#cca700;white-space:pre;-webkit-text-stroke-width:0.45px">Loaded '/usr/share/dotnet/shared/Microsoft.NETCore.App/3.1.27/Microsoft.Win32.Regi</span><span style="left:73.00px;top:184.50px;font:400 30.68px/30.68px 'DejaVu Sans Mono', 'Liberation Mono', monospace;color:#cca700;white-space:pre;-webkit-text-stroke-width:0.45px">stry.dll'. Skipped loading symbols. Module is optimized and the debugger option 'J</span><span style="left:73.00px;top:231.54px;font:400 30.68px/30.68px 'DejaVu Sans Mono', 'Liberation Mono', monospace;color:#cca700;white-space:pre;-webkit-text-stroke-width:0.45px">ust My Code' is enabled.</span></div>
<div style="left:865.60px;top:1165.00px;width:1620.40px;height:7.00px;background:linear-gradient(#000000aa,#00000000);"></div>
<div style="left:865.60px;top:1434.90px;width:1620.40px;height:2.40px;background:#434343;"></div>
<span style="left:141.49px;top:1496.52px;font:400 28.8px/28.8px 'Liberation Sans', sans-serif;color:#ffffff;white-space:pre;transform:scaleX(1.0143);transform-origin:0 0;">0</span>
<span style="left:206.56px;top:1496.52px;font:400 28.8px/28.8px 'Liberation Sans', sans-serif;color:#ffffff;white-space:pre;transform:scaleX(1.0429);transform-origin:0 0;">2</span>
<span style="left:272.09px;top:1496.52px;font:400 28.8px/28.8px 'Liberation Sans', sans-serif;color:#ffffff;white-space:pre;transform:scaleX(0.9067);transform-origin:0 0;">21</span>
<span style="left:384.00px;top:1496.52px;font:400 28.8px/28.8px 'Liberation Sans', sans-serif;color:#ffffff;white-space:pre;transform:scaleX(0.9879);transform-origin:0 0;">filtermodule Remote Debug (.NET Core) (iotedgemsdn2)</span>
<span style="left:1247.57px;top:1496.52px;font:400 28.8px/28.8px 'Liberation Sans', sans-serif;color:#ffffff;white-space:pre;transform:scaleX(1.0157);transform-origin:0 0;">iotedgemsdn2</span>
<span style="left:1676.08px;top:1496.52px;font:400 28.8px/28.8px 'Liberation Sans', sans-serif;color:#ffffff;white-space:pre;transform:scaleX(0.9183);transform-origin:0 0;">Spaces: 4</span>
<span style="left:1831.13px;top:1496.52px;font:400 28.8px/28.8px 'Liberation Sans', sans-serif;color:#ffffff;white-space:pre;transform:scaleX(0.9367);transform-origin:0 0;">UTF-8</span>
<span style="left:1945.86px;top:1496.52px;font:400 28.8px/28.8px 'Liberation Sans', sans-serif;color:#ffffff;white-space:pre;transform:scaleX(0.8370);transform-origin:0 0;">CRLF</span>
<span style="left:2035.06px;top:1496.52px;font:400 28.8px/28.8px 'Liberation Sans', sans-serif;color:#ffffff;white-space:pre;transform:scaleX(0.9389);transform-origin:0 0;">C#</span>
<span style="left:2150.39px;top:1496.52px;font:400 28.8px/28.8px 'Liberation Sans', sans-serif;color:#ffffff;white-space:pre;transform:scaleX(0.9529);transform-origin:0 0;">1 Spell</span>
<svg style="left:0;top:0" width="2486" height="1536" viewBox="0 0 2486 1536"><path d="M52.0 19.6 L25.0 42.0" stroke="#1b86d3" stroke-width="6.2" fill="none" stroke-linecap="butt" stroke-linejoin="miter" /><path d="M52.0 51.9 L25.0 29.5" stroke="#1272b8" stroke-width="6.2" fill="none" stroke-linecap="butt" stroke-linejoin="miter" /><path d="M50.5 16.8 L61.3 22 L61.3 49.5 L50.5 54.7 Z" fill="#2fa3f2" /><rect x="2005.20" y="20.40" width="31.20" height="31.20" rx="3.6" stroke="#949494" stroke-width="2.8" fill="none"/><path d="M2008.6 19 H2018.6 V53 H2008.6 Q2003.8 53 2003.8 48.2 V23.8 Q2003.8 19 2008.6 19 Z" fill="#949494" /><rect x="2057.90" y="20.40" width="31.20" height="31.20" rx="3.6" stroke="#949494" stroke-width="2.8" fill="none"/><path d="M2056.5 40 H2090.5 V48.2 Q2090.5 53 2085.7 53 H2061.3 Q2056.5 53 2056.5 48.2 Z" fill="#949494" /><rect x="2110.60" y="20.40" width="31.20" height="31.20" rx="3.6" stroke="#949494" stroke-width="2.8" fill="none"/><path d="M2130 20 V52" stroke="#949494" stroke-width="3.0" fill="none" stroke-linecap="butt" stroke-linejoin="miter" /><rect x="2165.80" y="22.80" width="11.80" height="26.00" rx="2.6" stroke="#949494" stroke-width="2.8" fill="none"/><rect x="2184.70" y="22.80" width="9.70" height="9.20" rx="2.4" stroke="#949494" stroke-width="2.8" fill="none"/><rect x="2184.70" y="39.70" width="9.70" height="9.20" rx="2.4" stroke="#949494" stroke-width="2.8" fill="none"/><path d="M2246 37 H2269" stroke="#949494" stroke-width="2.2" fill="none" stroke-linecap="butt" stroke-linejoin="miter" /><rect x="2339.30" y="27.30" width="18.40" height="18.40" rx="0" stroke="#949494" stroke-width="2.6" fill="none"/><path d="M2430.3 26.0 L2450.5 46.2 M2450.5 26.0 L2430.3 46.2" stroke="#949494" stroke-width="2.6" fill="none" stroke-linecap="butt" stroke-linejoin="miter" /><path d="M51.3 101.8 H69 L80.7 113.5 V138.1 Q80.7 141.1 77.7 141.1 H51.3 Q48.3 141.1 48.3 138.1 V104.8 Q48.3 101.8 51.3 101.8 Z M69 101.8 V113.5 H80.7" stroke="#858585" stroke-width="3.8" fill="none" stroke-linecap="round" stroke-linejoin="round" /><path d="M46.4 116.8 H35.9 Q32.9 116.8 32.9 119.8 V152.8 Q32.9 155.8 35.9 155.8 H62.4 Q65.4 155.8 65.4 152.8 V143" stroke="#858585" stroke-width="3.8" fill="none" stroke-linecap="round" stroke-linejoin="round" /><circle cx="65.50" cy="235.10" r="18.30" stroke="#858585" stroke-width="3.8" fill="none"/><path d="M52.8 248.6 L32.5 271.6" stroke="#858585" stroke-width="4.3999999999999995" fill="none" stroke-linecap="butt" stroke-linejoin="miter" /><circle cx="45.20" cy="339.00" r="7.60" stroke="#858585" stroke-width="3.8" fill="none"/><circle cx="45.20" cy="378.90" r="7.60" stroke="#858585" stroke-width="3.8" fill="none"/><circle cx="70.60" cy="349.70" r="7.60" stroke="#858585" stroke-width="3.8" fill="none"/><path d="M45.2 346.6 V371.3" stroke="#858585" stroke-width="3.8" fill="none" stroke-linecap="butt" stroke-linejoin="miter" /><path d="M70.6 357.3 C70.6 366 64 366.6 57 366.6 C50 366.6 45.6 367.5 45.2 371.3" stroke="#858585" stroke-width="3.8" fill="none" stroke-linecap="butt" stroke-linejoin="miter" /><path d="M48.3 470 V447.9 L84.6 470.3 L70 479.5" stroke="#ffffff" stroke-width="3.8" fill="none" stroke-linecap="butt" stroke-linejoin="miter" stroke-linejoin="miter"/><ellipse cx="43.2" cy="490.2" rx="8" ry="10.6" stroke="#fff" stroke-width="3.6" fill="none"/><path d="M35 481.2 H51.4" stroke="#fff" stroke-width="3.4" fill="none" stroke-linecap="butt" stroke-linejoin="miter" /><path d="M35.2 484 L29 478.5 M51.2 484 L57.4 478.5 M34.6 490.2 H28 M51.8 490.2 H58.4 M35.2 496.5 L29 502 M51.2 496.5 L57.4 502" stroke="#fff" stroke-width="3.4" fill="none" stroke-linecap="butt" stroke-linejoin="miter" /><circle cx="77.10" cy="494.80" r="19.20" stroke="none" stroke-width="0" fill="#007acc"/><path d="M81.4 588 V570.9 Q81.4 567.9 78.4 567.9 H34.7 Q31.7 567.9 31.7 570.9 V602 Q31.7 605 34.7 605 H56" stroke="#858585" stroke-width="3.8" fill="none" stroke-linecap="round" stroke-linejoin="round" /><path d="M41.5 613 H57.5" stroke="#858585" stroke-width="3.8" fill="none" stroke-linecap="butt" stroke-linejoin="miter" /><circle cx="71.80" cy="603.90" r="13.20" stroke="#858585" stroke-width="3.8" fill="none"/><path d="M65.8 602.4 L70.8 606.5 L65.8 610.6 M78.2 597.6 L73.2 601.8 L78.2 606.0" stroke="#858585" stroke-width="2.6" fill="none" stroke-linecap="butt" stroke-linejoin="miter" /><path d="M30.5 688.8 H51.2 V709.5 H74.1 V728.4 Q74.1 731.4 71.1 731.4 H33.5 Q30.5 731.4 30.5 728.4 Z M30.5 709.5 H51.2 V731.4" stroke="#858585" stroke-width="3.8" fill="none" stroke-linecap="round" stroke-linejoin="round" /><rect x="63.30" y="678.10" width="21.70" height="21.20" rx="3" stroke="#858585" stroke-width="3.8" fill="none"/><path d="M73.5 806 A23 23 0 1 0 53.8 844.6 H75.7 V820.5" stroke="#858585" stroke-width="6" fill="none" stroke-linecap="butt" stroke-linejoin="miter" /><path d="M44 818.8 L57.9 831.8 L84.3 803.4" stroke="#858585" stroke-width="6.4" fill="none" stroke-linecap="butt" stroke-linejoin="miter" /><path d="M38.8 911.4 H84.6 L79 958.2 H31.6 Z" stroke="#858585" stroke-width="3.8" fill="none" stroke-linecap="round" stroke-linejoin="round" /><path d="M43.8 925.4 L59.2 934.8 L43.8 943.8" stroke="#858585" stroke-width="4.4" fill="none" stroke-linecap="butt" stroke-linejoin="miter" /><path d="M54 945.6 H72" stroke="#858585" stroke-width="4.4" fill="none" stroke-linecap="butt" stroke-linejoin="miter" /><circle cx="39.80" cy="1050.00" r="4.30" stroke="none" stroke-width="0" fill="#858585"/><circle cx="57.90" cy="1050.00" r="4.30" stroke="none" stroke-width="0" fill="#858585"/><circle cx="76.00" cy="1050.00" r="4.30" stroke="none" stroke-width="0" fill="#858585"/><circle cx="57.80" cy="1310.00" r="27.20" stroke="#858585" stroke-width="3.8" fill="none"/><circle cx="57.80" cy="1303.00" r="11.80" stroke="#858585" stroke-width="3.8" fill="none"/><path d="M39.6 1330.6 C43 1320.5 50 1316.8 57.8 1316.8 C65.6 1316.8 72.6 1320.5 76 1330.6" stroke="#858585" stroke-width="3.8" fill="none" stroke-linecap="butt" stroke-linejoin="miter" /><circle cx="77.00" cy="1329.50" r="19.20" stroke="none" stroke-width="0" fill="#007acc"/><path d="M52.97 1405.38 L53.41 1398.04 L61.99 1398.04 L62.43 1405.38 L68.29 1407.81 L73.81 1402.93 L79.87 1408.99 L74.99 1414.51 L77.42 1420.37 L84.76 1420.81 L84.76 1429.39 L77.42 1429.83 L74.99 1435.69 L79.87 1441.21 L73.81 1447.27 L68.29 1442.39 L62.43 1444.82 L61.99 1452.16 L53.41 1452.16 L52.97 1444.82 L47.11 1442.39 L41.59 1447.27 L35.53 1441.21 L40.41 1435.69 L37.98 1429.83 L30.64 1429.39 L30.64 1420.81 L37.98 1420.37 L40.41 1414.51 L35.53 1408.99 L41.59 1402.93 L47.11 1407.81 Z" stroke="#858585" stroke-width="3.8" fill="none" stroke-linejoin="miter"/><circle cx="57.70" cy="1425.10" r="6.80" stroke="#858585" stroke-width="3.8" fill="none"/><path d="M401 103.6 L419.4 115.2 L401 126.8 Z" stroke="#89d185" stroke-width="3.0" fill="none" stroke-linecap="round" stroke-linejoin="round" /><path d="M666.2 110.2 L677.2 121.0 L688.2 110.2" stroke="#c5c5c5" stroke-width="2.5" fill="none" stroke-linecap="butt" stroke-linejoin="miter" /><path d="M745.81 102.87 L746.06 98.69 L750.94 98.69 L751.19 102.87 L754.53 104.26 L757.67 101.48 L761.12 104.93 L758.34 108.07 L759.73 111.41 L763.91 111.66 L763.91 116.54 L759.73 116.79 L758.34 120.13 L761.12 123.27 L757.67 126.72 L754.53 123.94 L751.19 125.33 L750.94 129.51 L746.06 129.51 L745.81 125.33 L742.47 123.94 L739.33 126.72 L735.88 123.27 L738.66 120.13 L737.27 116.79 L733.09 116.54 L733.09 111.66 L737.27 111.41 L738.66 108.07 L735.88 104.93 L739.33 101.48 L742.47 104.26 Z" stroke="#c5c5c5" stroke-width="2.5" fill="none" stroke-linejoin="miter"/><circle cx="748.50" cy="114.10" r="3.90" stroke="#c5c5c5" stroke-width="2.5" fill="none"/><circle cx="798.60" cy="114.10" r="2.60" stroke="none" stroke-width="0" fill="#c5c5c5"/><circle cx="810.80" cy="114.10" r="2.60" stroke="none" stroke-width="0" fill="#c5c5c5"/><circle cx="823.00" cy="114.10" r="2.60" stroke="none" stroke-width="0" fill="#c5c5c5"/><path d="M128.0 177.6 L139.0 188.6 L150.0 177.6" stroke="#c5c5c5" stroke-width="2.5" fill="none" stroke-linecap="butt" stroke-linejoin="miter" /><path d="M826.5 174.5 V171 Q826.5 168.6 829 168.6 H843.8 Q846.3 168.6 846.3 171 V185 Q846.3 187.5 843.8 187.5 H840.5" stroke="#c5c5c5" stroke-width="2.4" fill="none" stroke-linecap="round" stroke-linejoin="round" /><rect x="819.60" y="175.80" width="19.80" height="18.90" rx="2.5" stroke="#c5c5c5" stroke-width="2.4" fill="none"/><path d="M823.6 185.3 H835.4" stroke="#c5c5c5" stroke-width="2.6" fill="none" stroke-linecap="butt" stroke-linejoin="miter" /><path d="M149.2 230.2 L160.5 241.4 L171.8 230.2" stroke="#c5c5c5" stroke-width="2.5" fill="none" stroke-linecap="butt" stroke-linejoin="miter" /><path d="M168.4 283.0 L179.7 294.2 L191.0 283.0" stroke="#c5c5c5" stroke-width="2.5" fill="none" stroke-linecap="butt" stroke-linejoin="miter" /><path d="M193.8 329.8 L205.0 341.0 L193.8 352.2" stroke="#c5c5c5" stroke-width="2.5" fill="none" stroke-linecap="butt" stroke-linejoin="miter" /><path d="M193.8 699.4 L205.0 710.6 L193.8 721.8" stroke="#c5c5c5" stroke-width="2.5" fill="none" stroke-linecap="butt" stroke-linejoin="miter" /><path d="M814.2 270.3 H832.5 L840.8 278.6 V299.2 Q840.8 301.6 838.4 301.6 H816.6 Q814.2 301.6 814.2 299.2 Z" stroke="#c5c5c5" stroke-width="2.4" fill="none" stroke-linecap="round" stroke-linejoin="round" /><path d="M133.6 746.8 L144.6 757.8 L133.6 768.8" stroke="#c5c5c5" stroke-width="2.5" fill="none" stroke-linecap="butt" stroke-linejoin="miter" /><path d="M128.0 805.6 L139.0 816.6 L150.0 805.6" stroke="#c5c5c5" stroke-width="2.5" fill="none" stroke-linecap="butt" stroke-linejoin="miter" /><path d="M154.4 851.4 L166.0 862.6 L154.4 873.8" stroke="#c5c5c5" stroke-width="2.5" fill="none" stroke-linecap="butt" stroke-linejoin="miter" /><path d="M154.4 904.2 L166.0 915.4 L154.4 926.6" stroke="#c5c5c5" stroke-width="2.5" fill="none" stroke-linecap="butt" stroke-linejoin="miter" /><path d="M154.4 957.0 L166.0 968.2 L154.4 979.4" stroke="#c5c5c5" stroke-width="2.5" fill="none" stroke-linecap="butt" stroke-linejoin="miter" /><path d="M149.0 1016.6 L160.3 1027.8 L171.6 1016.6" stroke="#c5c5c5" stroke-width="2.5" fill="none" stroke-linecap="butt" stroke-linejoin="miter" /><path d="M154.4 1168.2 L166.0 1179.4 L154.4 1190.6" stroke="#c5c5c5" stroke-width="2.5" fill="none" stroke-linecap="butt" stroke-linejoin="miter" /><path d="M154.4 1221.0 L166.0 1232.2 L154.4 1243.4" stroke="#c5c5c5" stroke-width="2.5" fill="none" stroke-linecap="butt" stroke-linejoin="miter" /><path d="M128.0 1293.6 L139.0 1304.6 L150.0 1293.6" stroke="#c5c5c5" stroke-width="2.5" fill="none" stroke-linecap="butt" stroke-linejoin="miter" /><path d="M179.6 1404.7 L186.6 1411.7 L199.0 1394.8" stroke="#ffffff" stroke-width="4.2" fill="none" stroke-linecap="butt" stroke-linejoin="miter" /><circle cx="143.00" cy="1457.00" r="10.00" stroke="none" stroke-width="0" fill="#e51400"/><path d="M179.6 1456.8 L186.6 1463.8 L199.0 1446.9" stroke="#ffffff" stroke-width="4.2" fill="none" stroke-linecap="butt" stroke-linejoin="miter" /><path d="M691.9 1472.3 L695.0 1462.0 L716.4 1440.8 Q718.6 1439.4 720.6 1441.0 L723.0 1443.4 Q724.6 1445.4 723.2 1447.6 L702.0 1469.0 Z M695.0 1462.0 L702.0 1469.0" stroke="#c5c5c5" stroke-width="2.4" fill="none" stroke-linecap="round" stroke-linejoin="round" /><path d="M745.4 1447.4 L764.8 1466.8 M764.8 1447.4 L745.4 1466.8" stroke="#c5c5c5" stroke-width="2.5" fill="none" stroke-linecap="butt" stroke-linejoin="miter" /><svg x="865.6" y="72" width="40" height="84" viewBox="865.6 72 40 84" overflow="hidden"><path d="M860.60 103.99 L860.94 100.96 L865.06 100.96 L865.40 103.99 L868.38 105.22 L870.76 103.32 L873.68 106.24 L871.78 108.62 L873.01 111.60 L876.04 111.94 L876.04 116.06 L873.01 116.40 L871.78 119.38 L873.68 121.76 L870.76 124.68 L868.38 122.78 L865.40 124.01 L865.06 127.04 L860.94 127.04 L860.60 124.01 L857.62 122.78 L855.24 124.68 L852.32 121.76 L854.22 119.38 L852.99 116.40 L849.96 116.06 L849.96 111.94 L852.99 111.60 L854.22 108.62 L852.32 106.24 L855.24 103.32 L857.62 105.22 Z" stroke="#6d8086" stroke-width="6.0" fill="none" stroke-linejoin="miter"/><circle cx="863.00" cy="114.00" r="2.00" stroke="#6d8086" stroke-width="6.0" fill="none"/></svg><path d="M2287.6 104.4 L2307.6 124.4 M2307.6 104.4 L2287.6 124.4" stroke="#ffffff" stroke-width="2.6" fill="none" stroke-linecap="butt" stroke-linejoin="miter" /><rect x="2355.30" y="98.70" width="28.80" height="27.80" rx="2.4" stroke="#c5c5c5" stroke-width="2.5" fill="none"/><path d="M2369.7 98.7 V126.5" stroke="#c5c5c5" stroke-width="2.5" fill="none" stroke-linecap="butt" stroke-linejoin="miter" /><circle cx="2418.80" cy="113.90" r="2.70" stroke="none" stroke-width="0" fill="#c5c5c5"/><circle cx="2431.00" cy="113.90" r="2.70" stroke="none" stroke-width="0" fill="#c5c5c5"/><circle cx="2443.20" cy="113.90" r="2.70" stroke="none" stroke-width="0" fill="#c5c5c5"/><path d="M1409.2 95.4 V123.9" stroke="#75beff" stroke-width="4.2" fill="none" stroke-linecap="butt" stroke-linejoin="miter" /><path d="M1418.4 100.6 L1433.2 110 L1418.4 119.4 Z" stroke="#75beff" stroke-width="3.6" fill="none" stroke-linecap="butt" stroke-linejoin="miter" /><path d="M1469.9 109.8 A13.4 13.4 0 0 1 1494.6 103.4" stroke="#75beff" stroke-width="3.4" fill="none" stroke-linecap="butt" stroke-linejoin="miter" /><path d="M1486.4 105.3 H1496.0 V95.6" stroke="#75beff" stroke-width="3.4" fill="none" stroke-linecap="butt" stroke-linejoin="miter" /><circle cx="1483.00" cy="119.40" r="5.20" stroke="none" stroke-width="0" fill="#75beff"/><path d="M1545.4 93.1 V112.0 M1536.4 104.0 L1545.4 113.0 L1554.4 104.0" stroke="#75beff" stroke-width="3.4" fill="none" stroke-linecap="butt" stroke-linejoin="miter" /><circle cx="1545.40" cy="122.30" r="5.20" stroke="none" stroke-width="0" fill="#75beff"/><path d="M1607.2 113.4 V94.8 M1598.2 103.4 L1607.2 94.4 L1616.2 103.4" stroke="#75beff" stroke-width="3.4" fill="none" stroke-linecap="butt" stroke-linejoin="miter" /><circle cx="1607.20" cy="122.30" r="5.20" stroke="none" stroke-width="0" fill="#75beff"/><path d="M1660.6 101.6 A12.8 12.8 0 1 1 1658.2 113.0" stroke="#89d185" stroke-width="3.4" fill="none" stroke-linecap="butt" stroke-linejoin="miter" /><path d="M1657.6 97.0 V106.2 H1666.8" stroke="#89d185" stroke-width="3.4" fill="none" stroke-linecap="butt" stroke-linejoin="miter" /><g transform="rotate(-40 1732 109.2)"><path d="M1711 109.2 H1719" stroke="#f48771" stroke-width="3.0" fill="none" stroke-linecap="butt" stroke-linejoin="miter" /><path d="M1728.2 101.4 H1724 A7.8 7.8 0 0 0 1724 117 H1728.2 Z" stroke="#f48771" stroke-width="3.0" fill="none" stroke-linecap="butt" stroke-linejoin="miter" /><path d="M1728.2 105.2 H1733 M1728.2 113.2 H1733" stroke="#f48771" stroke-width="3.0" fill="none" stroke-linecap="butt" stroke-linejoin="miter" /><path d="M1736.6 101.4 H1740.4 A7.8 7.8 0 0 1 1740.4 117 H1736.6 Z" stroke="#f48771" stroke-width="3.0" fill="none" stroke-linecap="butt" stroke-linejoin="miter" /><path d="M1748.2 109.2 H1754.4" stroke="#f48771" stroke-width="3.0" fill="none" stroke-linecap="butt" stroke-linejoin="miter" /></g><path d="M1762.2 106.0 L1770.9 114.6 L1779.6 106.0" stroke="#c5c5c5" stroke-width="2.3" fill="none" stroke-linecap="butt" stroke-linejoin="miter" /><path d="M1037.4 171.0 L1049.0 182.7 L1037.4 194.4" stroke="#a9a9a9" stroke-width="2.4" fill="none" stroke-linecap="butt" stroke-linejoin="miter" /><path d="M1243.4 171.0 L1255.0 182.7 L1243.4 194.4" stroke="#a9a9a9" stroke-width="2.4" fill="none" stroke-linecap="butt" stroke-linejoin="miter" /><path d="M1487.4 171.0 L1499.0 182.7 L1487.4 194.4" stroke="#a9a9a9" stroke-width="2.4" fill="none" stroke-linecap="butt" stroke-linejoin="miter" /><path d="M1739.0 171.0 L1750.6 182.7 L1739.0 194.4" stroke="#a9a9a9" stroke-width="2.4" fill="none" stroke-linecap="butt" stroke-linejoin="miter" /><path d="M2116.4 171.0 L2128.0 182.7 L2116.4 194.4" stroke="#a9a9a9" stroke-width="2.4" fill="none" stroke-linecap="butt" stroke-linejoin="miter" /><rect x="1768.2" y="170.9" width="13" height="7.4" rx="1" fill="none" stroke="#ee9d28" stroke-width="2.4" transform="rotate(-42 1774.7 174.6)"/><path d="M1777.2 179.6 V190.4 H1788.6 M1777.2 182.8 H1788.4" stroke="#ee9d28" stroke-width="2.4" fill="none" stroke-linecap="butt" stroke-linejoin="miter" /><rect x="1790.3" y="178.7" width="8.6" height="5" rx="0.8" fill="none" stroke="#ee9d28" stroke-width="2.3" transform="rotate(-42 1794.6 181.2)"/><rect x="1790.3" y="190.1" width="8.6" height="5" rx="0.8" fill="none" stroke="#ee9d28" stroke-width="2.3" transform="rotate(-42 1794.6 192.6)"/><path d="M2159 166.6 L2172.6 173.6 V189.4 L2159 196.4 L2145.4 189.4 V173.6 Z M2145.4 173.6 L2159 180.6 L2172.6 173.6 M2159 180.6 V196.4" stroke="#b180d7" stroke-width="2.5" fill="none" stroke-linecap="round" stroke-linejoin="round" /><path d="M885.0 654.2 H897.2 L906.2 666.9 L897.2 679.6 H885.0 Q882.2 679.6 882.2 676.8 V657.0 Q882.2 654.2 885.0 654.2 Z" stroke="#ffcc00" stroke-width="3.8" fill="none" stroke-linecap="round" stroke-linejoin="round" /><circle cx="892.90" cy="667.10" r="5.30" stroke="none" stroke-width="0" fill="#e51400"/><path d="M1299.0 654.4 H1311.2 L1320.2 667.0 L1311.2 679.6 H1299.0 Q1296.2 679.6 1296.2 676.8 V657.2 Q1296.2 654.4 1299.0 654.4 Z" stroke="#ffcc00" stroke-width="3.8" fill="none" stroke-linecap="round" stroke-linejoin="round" /><circle cx="1071.20" cy="654.30" r="11.00" stroke="none" stroke-width="0" fill="#ffcc00"/><path d="M1065.7 661 H1076.9 V672.6 Q1076.9 674.8 1074.7 674.8 H1067.9 Q1065.7 674.8 1065.7 672.6 Z" fill="#ffcc00" /><rect x="1068.60" y="666.30" width="5.30" height="5.50" rx="0" stroke="none" stroke-width="0" fill="#2b2a1c"/><circle cx="1423.20" cy="1123.70" r="2.70" stroke="none" stroke-width="0" fill="#c5c5c5"/><circle cx="1435.60" cy="1123.70" r="2.70" stroke="none" stroke-width="0" fill="#c5c5c5"/><circle cx="1448.00" cy="1123.70" r="2.70" stroke="none" stroke-width="0" fill="#c5c5c5"/><path d="M2309.2 1112.6 H2341.6" stroke="#c5c5c5" stroke-width="2.4" fill="none" stroke-linecap="butt" stroke-linejoin="miter" /><path d="M2309.2 1120.2 H2341.6" stroke="#c5c5c5" stroke-width="2.4" fill="none" stroke-linecap="butt" stroke-linejoin="miter" /><path d="M2309.2 1127.8 H2328.6" stroke="#c5c5c5" stroke-width="2.4" fill="none" stroke-linecap="butt" stroke-linejoin="miter" /><path d="M2309.2 1135.4 H2322.0" stroke="#c5c5c5" stroke-width="2.4" fill="none" stroke-linecap="butt" stroke-linejoin="miter" /><path d="M2331.6 1131.0 L2341.6 1141.0 M2341.6 1131.0 L2331.6 1141.0" stroke="#c5c5c5" stroke-width="2.4" fill="none" stroke-linecap="butt" stroke-linejoin="miter" /><path d="M2376.6 1129.0 L2388.1 1117.4 L2399.6 1129.0" stroke="#c5c5c5" stroke-width="2.5" fill="none" stroke-linecap="butt" stroke-linejoin="miter" /><path d="M2430.4 1113.6 L2451.0 1134.2 M2451.0 1113.6 L2430.4 1134.2" stroke="#c5c5c5" stroke-width="2.5" fill="none" stroke-linecap="butt" stroke-linejoin="miter" /><path d="M899.4 1450.2 L911.6 1462.0 L899.4 1473.8" stroke="#c8ccd0" stroke-width="3.1" fill="none" stroke-linecap="butt" stroke-linejoin="miter" /><path d="M30.9 1503.8 L40.5 1512.7 L30.9 1521.9 M51.4 1495.0 L42.2 1504.0 L51.4 1513.1" stroke="#ffffff" stroke-width="2.5" fill="none" stroke-linecap="butt" stroke-linejoin="miter" /><circle cx="117.40" cy="1509.00" r="13.40" stroke="#ffffff" stroke-width="2.4" fill="none"/><path d="M111.4 1503.0 L123.4 1515.0 M123.4 1503.0 L111.4 1515.0" stroke="#ffffff" stroke-width="2.4" fill="none" stroke-linecap="butt" stroke-linejoin="miter" /><path d="M183.0 1495.8 L196.4 1520.4 L169.6 1520.4 Z" stroke="#ffffff" stroke-width="2.4" fill="none" stroke-linecap="round" stroke-linejoin="round" /><path d="M183.0 1504.3 V1512.4" stroke="#ffffff" stroke-width="2.52" fill="none" stroke-linecap="butt" stroke-linejoin="miter" /><path d="M183.0 1514.6 V1517.5" stroke="#ffffff" stroke-width="2.52" fill="none" stroke-linecap="butt" stroke-linejoin="miter" /><circle cx="247.50" cy="1509.00" r="13.40" stroke="#ffffff" stroke-width="2.4" fill="none"/><path d="M247.5 1506.6 V1516.6" stroke="#ffffff" stroke-width="2.8" fill="none" stroke-linecap="butt" stroke-linejoin="miter" /><circle cx="247.50" cy="1501.80" r="1.90" stroke="none" stroke-width="0" fill="#ffffff"/><path d="M353.0 1507.0 V1497.4 L371.6 1509.4 L362.4 1515.4" stroke="#ffffff" stroke-width="2.4" fill="none" stroke-linecap="butt" stroke-linejoin="miter" /><ellipse cx="350.0" cy="1518.6" rx="5.2" ry="6.0" stroke="#fff" stroke-width="2.5" fill="none"/><path d="M345.0 1513.4 H355.0" stroke="#ffffff" stroke-width="2.2" fill="none" stroke-linecap="butt" stroke-linejoin="miter" /><path d="M344.6 1514.6 L341.4 1511.8 M355.4 1514.6 L358.6 1511.8 M344.4 1518.8 H340.6 M355.6 1518.8 H359.4 M344.8 1522.8 L341.4 1525.6 M355.2 1522.8 L358.6 1525.6" stroke="#ffffff" stroke-width="2.1" fill="none" stroke-linecap="butt" stroke-linejoin="miter" /><path d="M1151.0 1495.6 C1151.6 1502.6 1142.0 1506.0 1142.0 1514.4 C1142.0 1520.0 1146.2 1523.6 1151.6 1523.6 C1157.2 1523.6 1161.4 1519.8 1161.4 1514.4 C1161.4 1510.0 1158.6 1508.0 1158.4 1503.6 C1156.0 1505.4 1155.2 1507.4 1155.0 1509.4 C1155.6 1503.0 1154.6 1498.4 1151.0 1495.6 Z" stroke="#ffffff" stroke-width="2.3" fill="none" stroke-linecap="round" stroke-linejoin="round" /><path d="M1151.6 1523.4 C1147.6 1520.6 1149.6 1516.6 1151.8 1514.0 C1153.6 1516.6 1155.4 1520.6 1151.6 1523.4" stroke="#ffffff" stroke-width="2.0" fill="none" stroke-linecap="round" stroke-linejoin="round" /><path d="M1209.4 1498.2 H1220.4 L1223.6 1502.0 H1236.8 V1521.6 H1209.4 Z M1209.4 1506.6 H1220.6 L1223.6 1502.0" stroke="#ffffff" stroke-width="2.4" fill="none" stroke-linecap="round" stroke-linejoin="round" /><path d="M2125.2 1495.8 L2138.8 1520.4 L2111.7 1520.4 Z" stroke="#ffffff" stroke-width="2.4" fill="none" stroke-linecap="round" stroke-linejoin="round" /><path d="M2125.2 1504.3 V1512.4" stroke="#ffffff" stroke-width="2.52" fill="none" stroke-linecap="butt" stroke-linejoin="miter" /><path d="M2125.2 1514.6 V1517.5" stroke="#ffffff" stroke-width="2.52" fill="none" stroke-linecap="butt" stroke-linejoin="miter" /><ellipse cx="2289.6" cy="1516.6" rx="17.6" ry="9.6" fill="#fff"/><rect x="2275.60" y="1496.00" width="14.90" height="16.40" rx="6.5" stroke="none" stroke-width="0" fill="#ffffff"/><rect x="2288.60" y="1496.00" width="14.90" height="16.40" rx="6.5" stroke="none" stroke-width="0" fill="#ffffff"/><rect x="2280.40" y="1500.20" width="6.70" height="7.60" rx="3.2" stroke="none" stroke-width="0" fill="#cc6633"/><rect x="2292.20" y="1500.20" width="7.80" height="7.60" rx="3.2" stroke="none" stroke-width="0" fill="#cc6633"/><path d="M2279.4 1511.4 H2299.9 V1516.6 Q2299.9 1522.2 2289.6 1522.2 Q2279.4 1522.2 2279.4 1516.6 Z" fill="#cc6633" /><rect x="2283.90" y="1512.90" width="3.90" height="6.80" rx="1.9" stroke="none" stroke-width="0" fill="#ffffff"/><rect x="2291.40" y="1512.90" width="3.90" height="6.80" rx="1.9" stroke="none" stroke-width="0" fill="#ffffff"/><circle cx="2356.80" cy="1507.60" r="5.40" stroke="#ffffff" stroke-width="2.3" fill="none"/><path d="M2347.0 1524.0 C2347.0 1518.4 2351.4 1515.0 2357.0 1515.0 C2362.6 1515.0 2367.0 1518.4 2367.0 1524.0" stroke="#ffffff" stroke-width="2.3" fill="none" stroke-linecap="butt" stroke-linejoin="miter" /><path d="M2355.3 1500.2 V1495.3 H2375.3 V1508.0 H2370.8 L2367.3 1512.4 V1508.0 H2364.6" stroke="#ffffff" stroke-width="2.3" fill="none" stroke-linecap="butt" stroke-linejoin="miter" /><path d="M2436.4 1497.7 C2430.6 1497.7 2427.0 1501.4 2426.6 1507.6 L2425.6 1513.6 L2423.2 1518.4 H2445.0 L2443.6 1514.6 L2443.0 1509.6" stroke="#ffffff" stroke-width="2.3" fill="none" stroke-linecap="butt" stroke-linejoin="miter" /><path d="M2429.6 1520.2 H2438.0 C2437.4 1524.8 2430.2 1524.8 2429.6 1520.2 Z" fill="#ffffff" /><circle cx="2442.20" cy="1501.80" r="6.50" stroke="none" stroke-width="0" fill="#ffffff"/></svg>
</div></body></html>
